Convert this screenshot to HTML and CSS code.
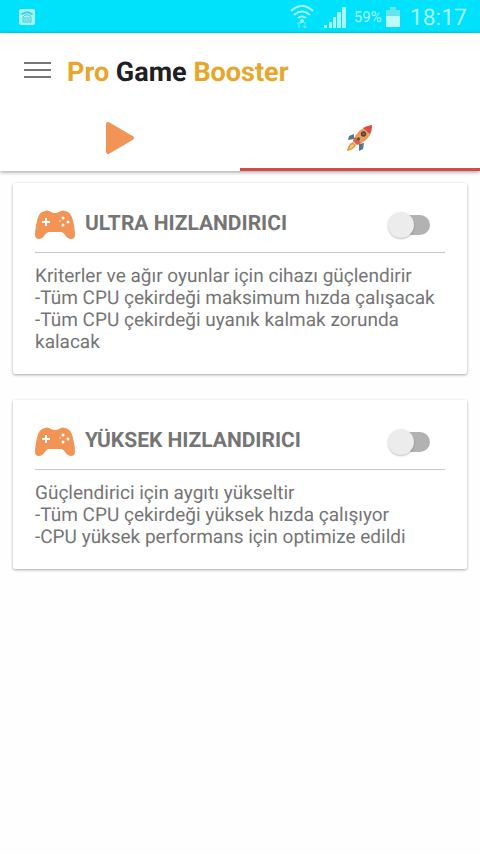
FILE: index.html
```html
<!DOCTYPE html>
<html lang="tr">
<head>
<meta charset="utf-8">
<meta name="viewport" content="width=device-width, initial-scale=1">
<title>Pro Game Booster</title>
<link rel="stylesheet" href="styles.css">
</head>
<body>
<svg class="defs" width="0" height="0" aria-hidden="true">
  <symbol id="gamepad" viewBox="0 0 42 30">
    <path fill="#f19456" d="M11 1C13 0 15 .5 17 2Q21 4 25 2C27 .5 29 0 31 1C36 2 38 6 39 11C40 16 41 20 41 25C41 29 37 30 34 28C31 26 30 22 27 22H15C12 22 11 26 8 28C5 30 1 29 1 25C1 20 2 16 3 11C4 6 6 2 11 1Z"/>
    <path fill="#fff" d="M11 8h2v3h3v2h-3v3h-2v-3H8v-2h3z"/>
    <g fill="#fff"><circle cx="29" cy="8" r="1.500"/><circle cx="34" cy="12" r="1.500"/><circle cx="29" cy="15" r="1.500"/><circle cx="26" cy="11" r=".7"/></g>
  </symbol>
</svg>
<div class="status">
  <svg class="notice" viewBox="0 0 16 16" width="16" height="16" aria-hidden="true">
    <rect width="16" height="16" rx="2" fill="#a5f3f4"/>
    <path d="M2.500 5.500Q8 1 13.500 5.500" fill="none" stroke="#43ced5" stroke-width="2"/>
    <path d="M4 13V8l2-2h4l2 2v5z" fill="none" stroke="#43ced5"/><path d="M5 9h6M5 11h6" stroke="#43ced5"/>
  </svg>
  <svg viewBox="0 0 24 24" width="24" height="24" aria-hidden="true">
    <g fill="none" stroke="#a5f7fa" stroke-width="2"><path d="M1 6Q12-4 23 6M4 10q8-7 16 0M8 13q4-3 8 0"/></g>
    <circle cx="12" cy="16" r="2" fill="#a5f7fa"/><path d="M9 23v-6m-2 2 2-2 2 2M15 17v6m-2-2 2 2 2-2" fill="none" stroke="#70ecee"/>
  </svg>
  <svg class="signal" viewBox="0 0 22 22" width="22" height="22" aria-hidden="true">
    <path fill="#a5f7fa" d="M0 19h3v3H0zM5 16h3v6H5zM9 11h3v11H9zM13 6h4v16h-4zM18 1h4v21h-4z"/>
  </svg>
  <span class="percent">59%</span>
  <svg class="battery" viewBox="0 0 14 20" width="14" height="20" aria-hidden="true">
    <path fill="#65e5ea" d="M4 0h6v3h4v6H0V3h4z"/><path fill="#bdfafa" d="M0 9h14v11H0z"/>
  </svg>
  <time class="clock">18:17</time>
</div>
<header class="top">
  <div class="toolbar">
    <button class="menu" type="button" aria-label="Menü">
      <svg viewBox="0 0 28 18" width="28" height="18"><path d="M0 2h27M0 9h27M0 16h27" stroke="#777" stroke-width="2"/></svg>
    </button>
    <h1 class="brand"><span class="gold">Pro</span> Game <span class="gold">Booster</span></h1>
  </div>
  <nav class="tabs">
    <button class="tab" type="button" aria-label="Oyunlar">
      <svg viewBox="0 0 30 34" width="30" height="34"><path d="M3 3v28L27 17z" fill="#f19456" stroke="#f19456" stroke-width="4" stroke-linejoin="round"/></svg>
    </button>
    <button class="tab active" type="button" aria-label="Hızlandırıcı" aria-current="page">
      <svg viewBox="0 0 28 28" width="28" height="28">
        <path d="M8 10 3 12 2 16 8 15zM18 19l-1 6-4 2v-7z" fill="#527987"/>
        <path d="M7 18Q2 20 1 27q7-1 9-6z" fill="#e29b48"/>
        <path d="M4 22l3-2 1 2-4 3z" fill="#efd074"/>
        <path d="M7 17Q11 4 26 1q0 15-15 20z" fill="#e6a05d"/>
        <path d="M17 4Q21 2 26 1q0 5-2 9z" fill="#d94b4d"/>
        <path d="M7 17l2-4 6 6-4 2z" fill="#d95e4e"/>
        <circle cx="17.500" cy="10" r="2.700" fill="#573e41"/><circle cx="17.500" cy="10" r="1.200" fill="#a95245"/>
        <circle cx="12.500" cy="15" r="1.700" fill="#704544"/>
      </svg>
    </button>
  </nav>
</header>
<main class="content">
  <section class="card">
    <div class="head">
      <svg class="pad" width="42" height="30" aria-hidden="true"><use href="#gamepad"/></svg>
      <h2><label for="ultra">ULTRA HIZLANDIRICI</label></h2>
      <input class="switch" id="ultra" type="checkbox" role="switch">
    </div>
    <p>Kriterler ve ağır oyunlar için cihazı güçlendirir<br>-Tüm CPU çekirdeği maksimum hızda çalışacak<br>-Tüm CPU çekirdeği uyanık kalmak zorunda kalacak</p>
  </section>
  <section class="card">
    <div class="head">
      <svg class="pad" width="42" height="30" aria-hidden="true"><use href="#gamepad"/></svg>
      <h2><label for="high">YÜKSEK HIZLANDIRICI</label></h2>
      <input class="switch" id="high" type="checkbox" role="switch">
    </div>
    <p>Güçlendirici için aygıtı yükseltir<br>-Tüm CPU çekirdeği yüksek hızda çalışıyor<br>-CPU yüksek performans için optimize edildi</p>
  </section>
</main>
</body>
</html>
```
FILE: styles.css
```css
* { box-sizing: border-box; }
body { margin: 0; background: #fefefe; color: #757575; font-family: Roboto, "Liberation Sans", sans-serif; text-rendering: geometricPrecision; }
svg { display: block; flex: none; }
button { border: 0; padding: 0; background: none; cursor: pointer; }
.defs { position: absolute; }

.status { display: flex; align-items: center; height: 33px; padding: 0 13px 0 19px; background: #00e1fb; color: #a5f7fa; }
.notice { margin-right: auto; }
.signal { margin-left: 10px; }
.percent { margin-left: 8px; font-size: 15px; }
.battery { margin-left: 4px; }
.clock { margin-left: 10px; padding-top: 2px; font-size: 23px; line-height: 32px; }

.top { background: #fff; box-shadow: 0 1px 4px rgba(0, 0, 0, 0.4); }
.toolbar { display: flex; align-items: center; height: 74px; padding: 0 24px; }
.menu { margin-right: 15px; }
.brand { margin: 0; padding-top: 4px; font-size: 27px; line-height: 32px; font-weight: 700; color: #202022; }
.gold { color: #e6a72c; }
.tabs { display: flex; }
.tab { display: flex; flex: 1; align-items: center; justify-content: center; height: 64px; border-bottom: 3px solid transparent; }
.active { border-bottom-color: #d34c4c; }

.content { display: flex; flex-direction: column; gap: 26px; padding: 12px 13px; }
.card { padding: 0 22px 21px; background: #fff; border-radius: 2px; box-shadow: 0 1px 3px rgba(0, 0, 0, 0.35); }
.head { display: flex; align-items: center; height: 70px; padding: 14px 15px 0 0; border-bottom: 1px solid #c8c8c8; }
.pad { margin-left: -1px; margin-right: 9px; }
h2 { flex: 1; margin: 0; padding-bottom: 2px; font-size: 21px; line-height: 28px; font-weight: 700; }
p { margin: 12px 0 0; font-size: 19px; line-height: 22px; }

.switch { appearance: none; flex: none; position: relative; width: 42px; height: 28px; margin: 0; cursor: pointer; }
.switch::before { content: ""; position: absolute; inset: 4px 0 4px 6px; border-radius: 10px; background: #b2b2b2; }
.switch::after { content: ""; position: absolute; left: 0; top: 1px; width: 26px; height: 26px; border-radius: 50%; background: #ececec; box-shadow: 0 1px 2px rgba(0, 0, 0, 0.25); }
.switch:checked::before { background: #f6c09a; }
.switch:checked::after { left: auto; right: 0; background: #f19456; }
```
